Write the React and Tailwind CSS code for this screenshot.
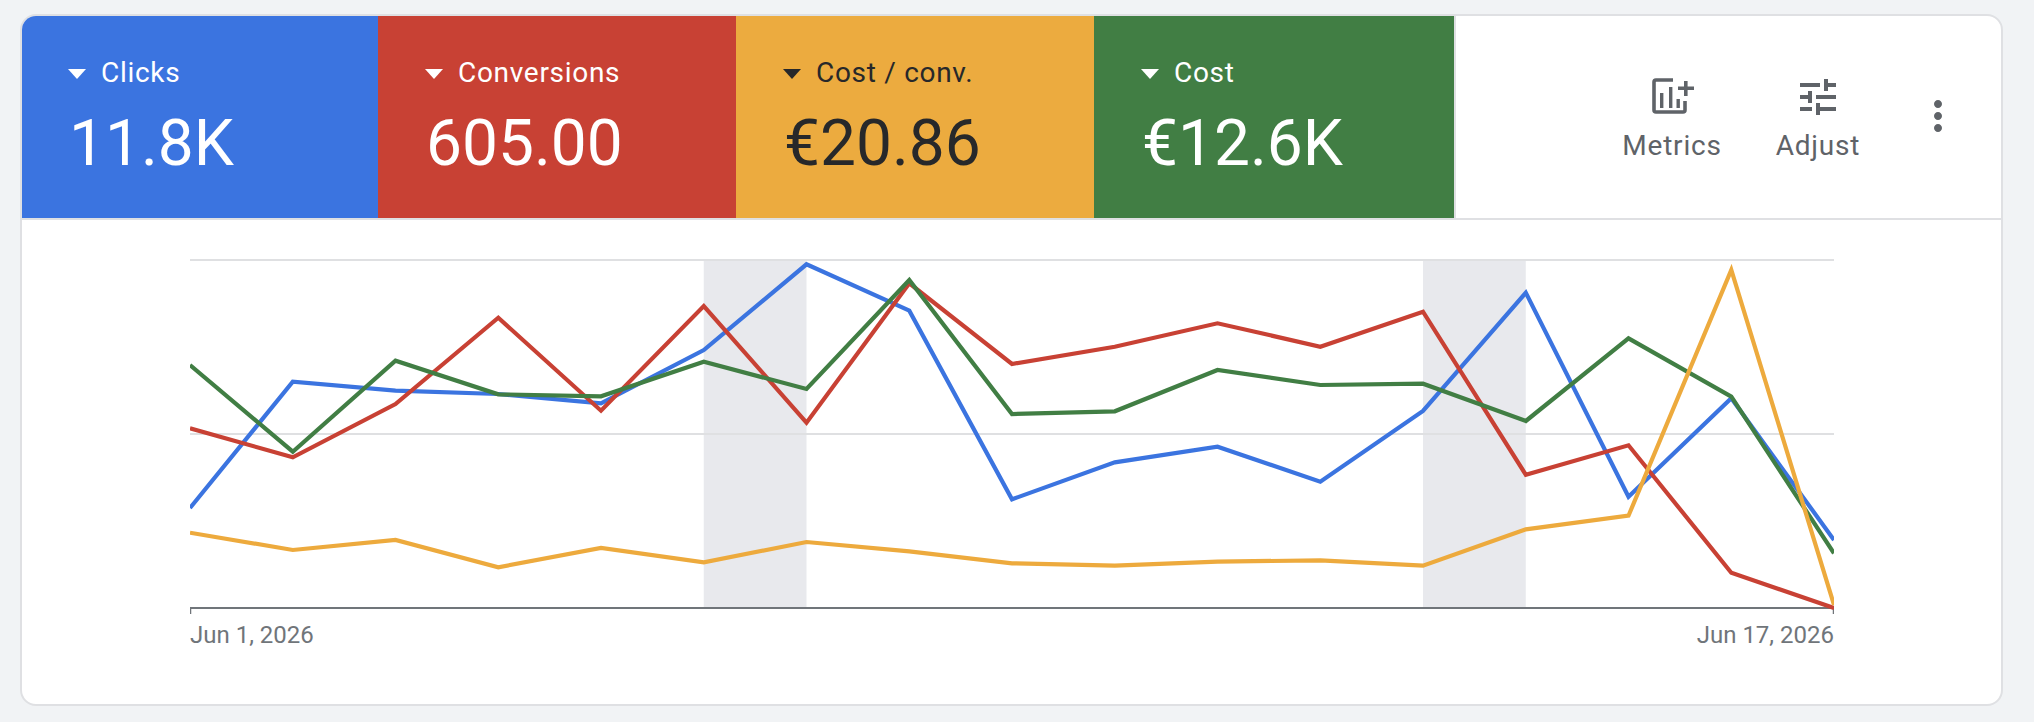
const tiles = [
  { label: "Clicks", value: "11.8K", box: "w-[356px] pl-[46px]", bg: "bg-[#3b74e0]", text: "text-white" },
  { label: "Conversions", value: "605.00", box: "w-[358px] pl-[47px]", bg: "bg-[#c84134]", text: "text-white" },
  { label: "Cost / conv.", value: "€20.86", box: "w-[358px] pl-[47px]", bg: "bg-[#ecab3f]", text: "text-[#27282a]" },
  { label: "Cost", value: "€12.6K", box: "w-[360px] pl-[47px]", bg: "bg-[#417e44]", text: "text-white" },
];

const series = [
  {
    color: "#3b74e0",
    y: [508, 381.7, 390.7, 394, 403.3, 350, 264.3, 310.7, 499.3, 462.3, 446.7, 481.7, 411, 292.7, 496.7, 398.3, 540],
  },
  {
    color: "#c84134",
    y: [428.3, 457.3, 404, 317.7, 410.7, 306, 422.7, 283.3, 364, 346.7, 323.3, 346.7, 311.7, 474.7, 445.3, 572.7, 608],
  },
  {
    color: "#417e44",
    y: [365, 451.7, 360.7, 394.3, 396.3, 361.7, 389, 280, 414, 411.3, 370, 385, 383.7, 421, 338.3, 396.7, 553.3],
  },
  {
    color: "#edaa3d",
    y: [532.7, 550, 540, 567.3, 548, 562.3, 542, 551.3, 563.3, 565.7, 561.7, 560.3, 565.7, 529.3, 515.7, 270, 605],
  },
];

const STEP = 102.75;
const TOP = 260;

const points = (ys) =>
  ys.map((y, i) => `${(i * STEP).toFixed(1)},${(y - TOP + 1).toFixed(1)}`).join(" ");

const Chart = () => (
  <svg width="1644" height="356" viewBox="0 0 1644 356" className="block">
    <rect x={5 * STEP} y="0" width={STEP} height="348" fill="#e8e9ed" />
    <rect x={12 * STEP} y="0" width={STEP} height="348" fill="#e8e9ed" />
    <line x1="0" x2="1644" y1="1" y2="1" stroke="#dfe0e2" strokeWidth="2" />
    <line x1="0" x2="1644" y1="175" y2="175" stroke="#dfe0e2" strokeWidth="2" />
    <line x1="0" x2="1644" y1="349" y2="349" stroke="#70757a" strokeWidth="2" />
    <line x1="0.5" x2="0.5" y1="349" y2="355" stroke="#70757a" strokeWidth="1.5" />
    <line x1="1643.5" x2="1643.5" y1="349" y2="355" stroke="#70757a" strokeWidth="1.5" />
    {series.map((s) => (
      <polyline key={s.color} points={points(s.y)} fill="none" stroke={s.color} strokeWidth="4.2" />
    ))}
  </svg>
);

const Tile = ({ label, value, box, bg, text }) => (
  <div className={`${box} h-[202px] pt-[41px] ${bg} ${text}`}>
    <div className="flex items-center gap-[15px] h-[32px]">
      <span className="w-0 h-0 border-x-[9px] border-x-transparent border-t-[10px] border-t-current mt-[1px]" />
      <span className="text-[28px] font-['Roboto',sans-serif] tracking-[0.7px]">{label}</span>
    </div>
    <div className="mt-[19px] ml-[1px] text-[64px] leading-[72px] font-['Roboto',sans-serif]">{value}</div>
  </div>
);

const MetricsIcon = () => (
  <svg width="48" height="48" viewBox="0 0 48 48" fill="currentColor">
    <path
      d="M25 7H8a2 2 0 0 0-2 2v28a2 2 0 0 0 2 2h27a2 2 0 0 0 2-2V28"
      fill="none"
      stroke="currentColor"
      strokeWidth="3.6"
    />
    <path d="M12 20h3.4v15H12zM21 14h3.4v21H21zM28.5 26h3.4v9h-3.4z" />
    <path d="M30 13.5h6V8h3.6v5.5H46v3.6h-6.4V23H36v-5.9h-6z" />
  </svg>
);

const AdjustIcon = () => (
  <svg width="48" height="48" viewBox="0 0 24 24" fill="currentColor">
    <path d="M3 17v2h6v-2H3zM3 5v2h10V5H3zm10 16v-2h8v-2h-8v-2h-2v6h2zM7 9v2H3v2h4v2h2V9H7zm14 4v-2H11v2h10zm-6-4h2V7h4V5h-4V3h-2v6z" />
  </svg>
);

const ToolButton = ({ label, children }) => (
  <button className="flex flex-col items-center w-[146px] text-[#5f6368]">
    {children}
    <span className="mt-[7px] text-[28px] leading-[36px] font-['Roboto',sans-serif] tracking-[0.8px]">{label}</span>
  </button>
);

export default function App() {
  return (
    <div className="w-[2034px] h-[722px] bg-[#f1f3f5] pt-[14px] pl-[20px]">
      <div className="w-[1983px] h-[692px] bg-white border-2 border-[#dfe0e3] rounded-[16px] overflow-hidden">
        <div className="flex h-[202px] border-b-2 border-[#dfe0e3] box-content">
          {tiles.map((t) => (
            <Tile key={t.label} {...t} />
          ))}
          <div className="flex flex-1 items-start border-l-2 border-[#dfe0e3] pt-[57px] pl-[143px]">
            <ToolButton label="Metrics">
              <MetricsIcon />
            </ToolButton>
            <ToolButton label="Adjust">
              <AdjustIcon />
            </ToolButton>
            <svg width="48" height="48" viewBox="0 0 24 24" fill="#5f6368" className="ml-[23px] mt-[19px]">
              <path d="M12 8c1.1 0 2-.9 2-2s-.9-2-2-2-2 .9-2 2 .9 2 2 2zm0 2c-1.1 0-2 .9-2 2s.9 2 2 2 2-.9 2-2-.9-2-2-2zm0 6c-1.1 0-2 .9-2 2s.9 2 2 2 2-.9 2-2-.9-2-2-2z" />
            </svg>
          </div>
        </div>
        <div className="pl-[168px] pt-[39px] w-[1812px]">
          <Chart />
          <div className="flex justify-between mt-[5px] text-[24px] leading-[30px] text-[#70757a] font-['Roboto',sans-serif]">
            <span>Jun 1, 2026</span>
            <span>Jun 17, 2026</span>
          </div>
        </div>
      </div>
    </div>
  );
}
